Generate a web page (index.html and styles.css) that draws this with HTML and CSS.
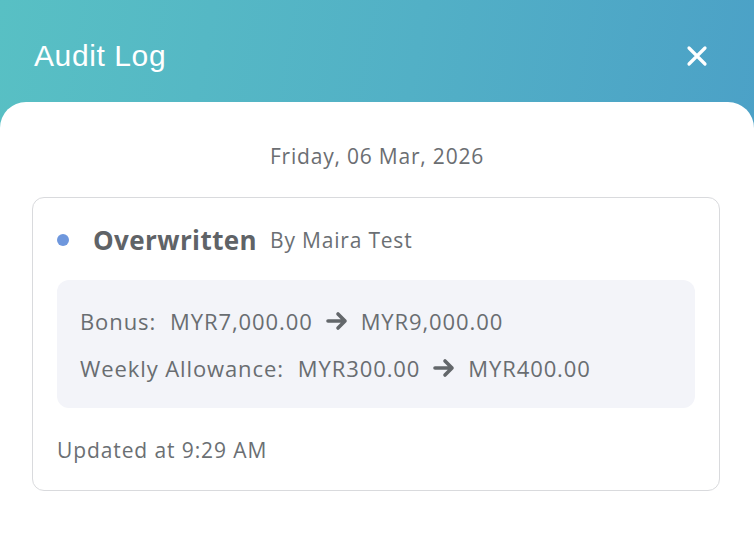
FILE: index.html
```html
<!DOCTYPE html>
<html>
<head>
<meta charset="utf-8">
<link rel="stylesheet" href="styles.css">
</head>
<body>
<div class="modal">
  <header class="header">
    <h1 class="title">Audit Log</h1>
    <button class="close" aria-label="Close">
      <svg width="22" height="22" viewBox="0 0 22 22"><path d="M3 3 L19 19 M19 3 L3 19" stroke="#fff" stroke-width="3.2" stroke-linecap="round"/></svg>
    </button>
  </header>
  <main class="panel">
    <div class="date">Friday, 06 Mar, 2026</div>
    <section class="card">
      <div class="card-head">
        <span class="dot"></span>
        <span class="action">Overwritten</span>
        <span class="by">By Maira Test</span>
      </div>
      <div class="changes">
        <div class="change">
          <span class="label">Bonus:</span>
          <span>MYR7,000.00</span>
          <svg class="arrow" width="22" height="20" viewBox="0 0 22 20"><path d="M2 10 H19 M12 3 L19 10 L12 17" fill="none" stroke="#63676b" stroke-width="3.6" stroke-linecap="round" stroke-linejoin="round"/></svg>
          <span>MYR9,000.00</span>
        </div>
        <div class="change">
          <span class="label">Weekly Allowance:</span>
          <span>MYR300.00</span>
          <svg class="arrow" width="22" height="20" viewBox="0 0 22 20"><path d="M2 10 H19 M12 3 L19 10 L12 17" fill="none" stroke="#63676b" stroke-width="3.6" stroke-linecap="round" stroke-linejoin="round"/></svg>
          <span>MYR400.00</span>
        </div>
      </div>
      <div class="updated">Updated at 9:29 AM</div>
    </section>
  </main>
</div>
</body>
</html>
```

FILE: styles.css
```css
* { box-sizing: border-box; }
html, body { margin: 0; padding: 0; height: 100%; }
body {
  font-family: "Open Sans", "Noto Sans", sans-serif;
  color: #6b6f73;
  background: #fff;
}
.modal {
  width: 754px;
  height: 548px;
  display: flex;
  flex-direction: column;
  background: linear-gradient(100deg, #58c0c4 0%, #52b0c6 50%, #4a9ec7 100%);
}
.header {
  height: 102px;
  flex: none;
  display: flex;
  align-items: center;
  justify-content: space-between;
  padding: 9px 46px 0 34px;
}
.title {
  margin: 0;
  font-family: "Liberation Sans", Arial, sans-serif;
  font-weight: 400;
  font-size: 30px;
  color: #fff;
  letter-spacing: 0.6px;
}
.close {
  background: none;
  border: 0;
  padding: 0;
  width: 22px;
  height: 22px;
  display: flex;
  cursor: pointer;
}
.panel {
  flex: 1;
  background: #fff;
  border-radius: 26px 26px 0 0;
  padding: 40px 0 0 32px;
}
.date {
  text-align: center;
  font-size: 21px;
  line-height: 28px;
  margin-right: 32px;
  margin-bottom: 27px;
  color: #6b6e72;
  letter-spacing: 0.8px;
}
.card {
  width: 688px;
  border: 1px solid #d9dadd;
  border-radius: 12px;
  padding: 22px 24px 26px 24px;
}
.card-head {
  display: flex;
  align-items: center;
  height: 40px;
}
.dot {
  width: 12px;
  height: 12px;
  border-radius: 50%;
  background: #6e97dd;
  margin-right: 24px;
}
.action {
  font-size: 26px;
  font-weight: 700;
  color: #5f6367;
  margin-right: 13px;
  letter-spacing: 0.4px;
}
.by {
  font-size: 21px;
  color: #6b6f73;
  letter-spacing: 0.8px;
}
.changes {
  margin-top: 20px;
  background: #f3f4f9;
  border-radius: 12px;
  padding: 27px 23px 26px 23px;
  display: flex;
  flex-direction: column;
  gap: 19px;
}
.change {
  display: flex;
  align-items: center;
  gap: 13px;
  font-size: 22px;
  line-height: 28px;
  color: #696d71;
  letter-spacing: 0.9px;
}
.change .label { margin-right: 1px; }
.updated {
  margin-top: 28px;
  font-size: 21px;
  line-height: 28px;
  color: #6b6f73;
  letter-spacing: 0.9px;
}
```
